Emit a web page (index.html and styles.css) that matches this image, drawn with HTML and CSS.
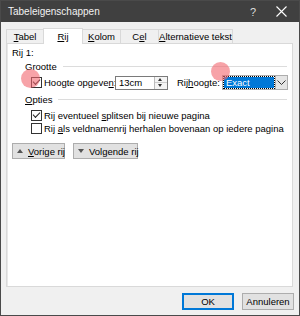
FILE: index.html
```html
<!DOCTYPE html>
<html lang="nl">
<head>
    <meta charset="UTF-8">
    <title>Tabeleigenschappen</title>
    <link rel="stylesheet" href="styles.css">
</head>
<body>
    <div class="window">
        <div class="titlebar">
            <span class="title">Tabeleigenschappen</span>
            <span class="help">?</span>
            <span class="close">
                <svg width="11" height="11" viewBox="0 0 11 11"><path d="M0.5 0.5L10.5 10.5M10.5 0.5L0.5 10.5" stroke="#fff" stroke-width="1.1"/></svg>
            </span>
        </div>

        <div class="tabs">
            <div class="tab"><u>T</u>abel</div>
            <div class="tab active"><u>R</u>ij</div>
            <div class="tab"><u>K</u>olom</div>
            <div class="tab">C<u>e</u>l</div>
            <div class="tab"><u>A</u>lternatieve tekst</div>
        </div>

        <div class="panel">
            <div class="rowlabel">Rij 1:</div>

            <div class="group">
                <div class="legend"><span>Grootte</span><div class="rule"></div></div>
                <div class="sizerow">
                    <label class="check">
                        <span class="box checked"></span>
                        <span>Hoogte opgeve<u>n</u>:</span>
                    </label>
                    <div class="spin">
                        <span class="spinvalue">13cm</span>
                        <span class="spinbtns">
                            <span class="up"></span>
                            <span class="down"></span>
                        </span>
                    </div>
                    <span class="hlabel">Rij<u>h</u>oogte:</span>
                    <div class="combo">
                        <span class="combovalue">Exact</span>
                        <span class="comboarrow">
                            <svg width="9" height="5" viewBox="0 0 9 5"><path d="M0.5 0.5L4.5 4.5L8.5 0.5" stroke="#333" fill="none"/></svg>
                        </span>
                    </div>
                </div>
            </div>

            <div class="group">
                <div class="legend"><span><u>O</u>pties</span><div class="rule"></div></div>
                <label class="check option">
                    <span class="box checked"></span>
                    <span>Rij eventueel <u>s</u>plitsen bij nieuwe pagina</span>
                </label>
                <label class="check option">
                    <span class="box"></span>
                    <span>Rij <u>a</u>ls veldnamenrij herhalen bovenaan op iedere pagina</span>
                </label>
            </div>

            <div class="navbuttons">
                <button class="navbtn"><span class="tri up"></span><span><u>V</u>orige rij</span></button>
                <button class="navbtn"><span class="tri down"></span><span>Volgende rij</span></button>
            </div>
        </div>

        <div class="footer">
            <button class="btn default">OK</button>
            <button class="btn">Annuleren</button>
        </div>

        <span class="touch first"></span>
        <span class="touch second"></span>
    </div>
</body>
</html>
```

FILE: styles.css
```css
body{
    margin: 0;
    font-family: "Liberation Sans", Arial, sans-serif;
    font-size: 9.5px;
    color: #000;
}
.window{
    position: relative;
    width: 298px;
    height: 314px;
    border: 1px solid #4a4a4a;
    background: #f0f0f0;
    display: flex;
    flex-direction: column;
    overflow: hidden;
    white-space: nowrap;
}
.titlebar{
    height: 21px;
    background: #404040;
    color: #f2f2f2;
    display: flex;
    align-items: center;
    padding-left: 7px;
    font-size: 10px;
}
.title{
    flex: 1;
}
.help{
    width: 14px;
    margin-right: 12px;
    font-size: 11px;
    color: #ddd;
}
.close{
    width: 13px;
    margin-right: 10px;
    display: flex;
}
.tabs{
    display: flex;
    margin: 6px 0 0 5px;
    height: 15px;
    align-items: flex-end;
}
.tab{
    height: 14px;
    line-height: 14px;
    border: 1px solid #d9d9d9;
    border-bottom: none;
    margin-right: -1px;
    background: #f0f0f0;
    box-sizing: border-box;
    text-align: center;
}
.tab:nth-child(1){ width: 38px; }
.tab:nth-child(2){ width: 40px; }
.tab:nth-child(3){ width: 39px; }
.tab:nth-child(4){ width: 39px; }
.tab:nth-child(5){ width: 75px; }
.tab.active{
    background: #fff;
    height: 16px;
    line-height: 16px;
    margin-bottom: -1px;
    position: relative;
    z-index: 1;
}
.panel{
    margin: 0 6px 0 5px;
    height: 240px;
    background: #fff;
    border: 1px solid #d9d9d9;
    box-shadow: inset 1px 0 0 #e8e8e8;
    padding: 2px 5px 0 5px;
}
.rowlabel{
    height: 14px;
    line-height: 14px;
}
.group{
    padding-left: 13px;
}
.legend{
    display: flex;
    align-items: center;
    gap: 6px;
    height: 12px;
}
.rule{
    flex: 1;
    height: 1px;
    background: #dcdcdc;
}
.sizerow{
    display: flex;
    align-items: center;
    height: 21px;
    padding-left: 6px;
}
.check{
    display: flex;
    align-items: center;
    gap: 2px;
}
.box{
    flex: none;
    width: 9px;
    height: 9px;
    border: 1px solid #333;
    background: #fff;
    position: relative;
}
.box.checked::after{
    content: "";
    position: absolute;
    left: 1px;
    top: 1px;
    width: 6px;
    height: 3px;
    border-left: 1.2px solid #222;
    border-bottom: 1.2px solid #222;
    transform: rotate(-45deg);
}
.sizerow .check{
    flex: none;
    width: 84px;
}
.spin{
    flex: none;
    display: flex;
    width: 53px;
    height: 14px;
    border: 1px solid #7a7a7a;
    box-sizing: border-box;
}
.spinvalue{
    flex: 1;
    padding-left: 3px;
    line-height: 12px;
}
.spinbtns{
    width: 12px;
    border-left: 1px solid #bbb;
    display: flex;
    flex-direction: column;
    background: #f4f4f4;
}
.spinbtns span{
    flex: 1;
    position: relative;
}
.spinbtns .up{
    border-bottom: 1px solid #ccc;
}
.spinbtns span::after{
    content: "";
    position: absolute;
    left: 3px;
    border-left: 2.5px solid transparent;
    border-right: 2.5px solid transparent;
}
.spinbtns .up::after{
    top: 1px;
    border-bottom: 3px solid #333;
}
.spinbtns .down::after{
    top: 1px;
    border-top: 3px solid #333;
}
.hlabel{
    flex: none;
    margin-left: 9px;
    width: 45px;
}
.combo{
    flex: none;
    display: flex;
    width: 66px;
    height: 15px;
    border: 1px solid #adadad;
    box-sizing: border-box;
    background: #fff;
}
.combovalue{
    flex: 1;
    margin: 1px;
    background: #0078d7;
    color: #fff;
    padding-left: 2px;
    line-height: 11px;
    outline: 1px dotted #000;
}
.comboarrow{
    width: 11px;
    border-left: 1px solid #adadad;
    background: #e5e5e5;
    display: flex;
    align-items: center;
    justify-content: center;
}
.option{
    height: 13px;
    padding-left: 6px;
}
.group + .group .legend{
    margin-bottom: 4px;
}
.navbuttons{
    display: flex;
    gap: 8px;
    margin-top: 8px;
}
.navbtn{
    height: 16px;
    border: 1px solid #adadad;
    background: #e1e1e1;
    font: inherit;
    padding: 0 4px;
    display: flex;
    align-items: center;
    gap: 5px;
}
.navbtn:first-child{ width: 53px; }
.navbtn:last-child{ width: 65px; }
.tri{
    width: 0;
    height: 0;
    border-left: 3.5px solid transparent;
    border-right: 3.5px solid transparent;
}
.tri.up{
    border-bottom: 4px solid #555;
}
.tri.down{
    border-top: 4px solid #555;
}
.footer{
    display: flex;
    justify-content: flex-end;
    gap: 8px;
    padding: 6px 5px 0 0;
}
.btn{
    width: 52px;
    height: 17px;
    border: 1px solid #adadad;
    background: #e1e1e1;
    font: inherit;
    padding: 0;
}
.btn.default{
    border: 1px solid #0078d7;
    box-shadow: inset 0 0 0 1px #0078d7;
}
.touch{
    position: absolute;
    border-radius: 50%;
    background: rgba(242, 102, 110, 0.6);
}
.touch.first{
    left: 20px;
    top: 68px;
    width: 19px;
    height: 19px;
}
.touch.second{
    left: 210px;
    top: 61px;
    width: 19px;
    height: 19px;
}
```
